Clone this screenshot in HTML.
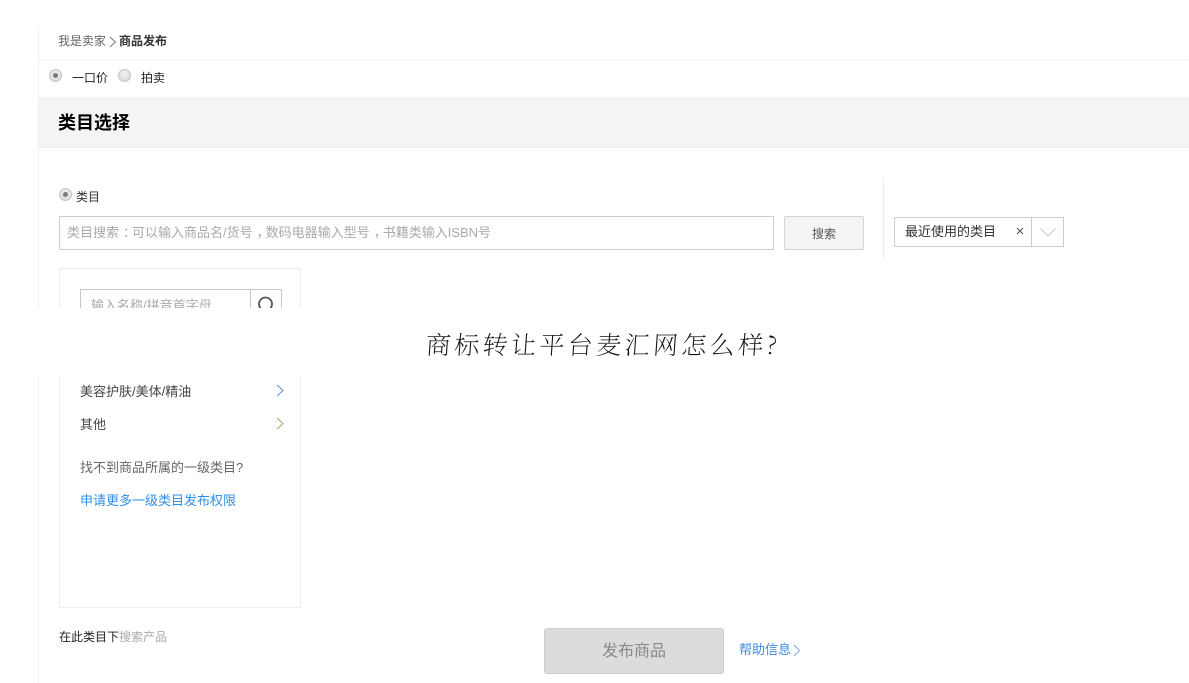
<!DOCTYPE html>
<html lang="zh">
<head>
<meta charset="utf-8">
<title>商品发布</title>
<style>
html,body{margin:0;padding:0;background:#fff}
body{width:1189px;height:683px;position:relative;overflow:hidden;font-family:"Liberation Sans","Noto Sans CJK SC",sans-serif;font-size:12px;color:#333}
.a{position:absolute;white-space:nowrap}
.tc{position:relative;left:4px}
.radio{position:absolute;width:11px;height:11px;border-radius:50%;border:1px solid #c4c4c4;background:radial-gradient(circle at 50% 40%,#f2f2f2,#d4d4d4);box-sizing:content-box}
.radio.on::after{content:"";position:absolute;left:3px;top:3px;width:5px;height:5px;border-radius:50%;background:#7a7a7a}
svg{position:absolute;overflow:visible}
</style>
</head>
<body>
<!-- breadcrumb -->
<div class="a" style="left:38px;top:25px;width:1151px;height:34px;background:#fff;box-shadow:0 1px 1px #eeeeee"></div>
<!-- page left rule -->
<div class="a" style="left:38px;top:25px;width:1px;height:658px;background:#f1f1f1"></div>
<div class="a" style="left:58px;top:33px;line-height:17px;color:#666">我是卖家</div>
<svg style="left:109px;top:36px" width="8" height="12"><path d="M1 1L6.5 6L1 11" fill="none" stroke="#777" stroke-width="1"/></svg>
<div class="a" style="left:119px;top:33px;line-height:17px;color:#333;font-weight:bold">商品发布</div>

<!-- price type -->
<div class="radio on" style="left:49px;top:69px"></div>
<div class="a" style="left:72px;top:70px;line-height:17px;color:#222">一口价</div>
<div class="radio" style="left:118px;top:69px"></div>
<div class="a" style="left:141px;top:70px;line-height:17px;color:#222">拍卖</div>

<!-- section header -->
<div class="a" style="left:38px;top:97px;width:1151px;height:51px;background:#f4f4f4;border-bottom:1px solid #eee;box-sizing:border-box"></div>
<div class="a" style="left:58px;top:111px;font-size:18px;line-height:24px;font-weight:bold;color:#000">类目选择</div>

<!-- category search -->
<div class="radio on" style="left:59px;top:188px"></div>
<div class="a" style="left:76px;top:189px;line-height:17px;color:#333">类目</div>
<div class="a" style="left:59px;top:216px;width:715px;height:34px;border:1px solid #ccc;box-sizing:border-box;border-radius:1px;background:#fff"></div>
<div class="a" style="left:67px;top:224px;font-size:13px;line-height:18px;color:#aaa">类目搜索<span class="tc">：</span>可以输入商品名/货号<span class="tc">，</span>数码电器输入型号<span class="tc">，</span>书籍类输入ISBN号</div>
<div class="a" style="left:784px;top:216px;width:80px;height:34px;border:1px solid #d4d4d4;box-sizing:border-box;border-radius:2px;background:#f4f4f4;text-align:center;line-height:35px;color:#555">搜索</div>

<div class="a" style="left:883px;top:178px;width:1px;height:81px;background:#eaeaea"></div>
<div class="a" style="left:894px;top:217px;width:170px;height:30px;border:1px solid #ccc;box-sizing:border-box;background:#fff"></div>
<div class="a" style="left:1031px;top:217px;width:1px;height:30px;background:#ccc"></div>
<div class="a" style="left:905px;top:223px;font-size:13px;line-height:18px;color:#333">最近使用的类目</div>
<svg style="left:1016px;top:227px" width="8" height="8"><path d="M1 1L7 7M7 1L1 7" stroke="#555" stroke-width="1.1"/></svg>
<svg style="left:1040px;top:228px" width="16" height="10"><path d="M0.5 0.5L8 8L15.5 0.5" fill="none" stroke="#c4c4c4" stroke-width="1"/></svg>

<!-- category panel -->
<div class="a" style="left:59px;top:268px;width:242px;height:340px;border:1px solid #eee;box-sizing:border-box;background:#fff"></div>
<div class="a" style="left:80px;top:289px;width:202px;height:40px;border:1px solid #c8c8c8;box-sizing:border-box"></div>
<div class="a" style="left:250px;top:289px;width:1px;height:40px;background:#c8c8c8"></div>
<div class="a" style="left:91px;top:297px;font-size:13px;line-height:18px;color:#aaa">输入名称/拼音首字母</div>
<svg style="left:257px;top:295px" width="18" height="20"><circle cx="8.5" cy="9" r="6.5" fill="none" stroke="#555" stroke-width="1.8"/><path d="M13 14L17 19" stroke="#555" stroke-width="1.6"/></svg>

<!-- overlay band with handwritten title -->
<div class="a" style="left:0;top:308px;width:1189px;height:67px;background:#fff"></div>
<div class="a" style="left:426px;top:327px;font-family:'Noto Serif CJK SC','WenQuanYi Zen Hei',serif;font-weight:200;font-size:25px;line-height:34px;letter-spacing:3.4px;color:#111;transform:skewX(-4deg);">商标转让平台麦汇网怎么样?</div>

<!-- list -->
<div class="a" style="left:80px;top:383px;font-size:13px;line-height:18px;color:#444">美容护肤/美体/精油</div>
<svg style="left:276px;top:384px" width="8" height="13"><path d="M1 1L7 6.5L1 12" fill="none" stroke="#5a94c8" stroke-width="1"/></svg>
<div class="a" style="left:80px;top:416px;font-size:13px;line-height:18px;color:#444">其他</div>
<svg style="left:276px;top:417px" width="8" height="13"><path d="M1 1L7 6.5L1 12" fill="none" stroke="#b89a70" stroke-width="1"/></svg>
<div class="a" style="left:80px;top:459px;font-size:13px;line-height:18px;color:#666">找不到商品所属的一级类目?</div>
<div class="a" style="left:80px;top:492px;font-size:13px;line-height:18px;color:#2f8fe8">申请更多一级类目发布权限</div>

<!-- footer -->
<div class="a" style="left:59px;top:629px;line-height:17px;color:#222">在此类目下<span style="color:#aaa">搜索产品</span></div>
<div class="a" style="left:544px;top:628px;width:180px;height:46px;border:1px solid #ccc;box-sizing:border-box;border-radius:3px;background:#dcdcdc;text-align:center;font-size:16px;line-height:46px;color:#888">发布商品</div>
<div class="a" style="left:739px;top:641px;font-size:13px;line-height:18px;color:#3d8ce0">帮助信息</div>
<svg style="left:793px;top:644px" width="8" height="13"><path d="M1 1L6.5 6.5L1 12" fill="none" stroke="#7aa6d8" stroke-width="1"/></svg>
</body>
</html>
